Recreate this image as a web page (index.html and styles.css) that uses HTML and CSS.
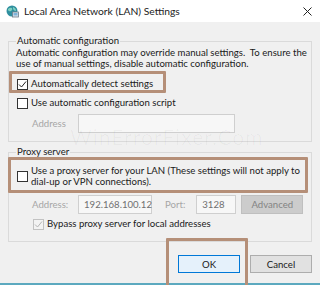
FILE: index.html
```html
<!DOCTYPE html>
<html>
<head>
<meta charset="utf-8">
<link rel="stylesheet" href="styles.css">
</head>
<body>
<div class="dialog">
  <div class="titlebar">
    <svg class="appicon" width="13" height="13" viewBox="0 0 13 13">
      <circle cx="6" cy="6" r="5.5" fill="#2f8f9f"/>
      <path d="M2 4 Q4 2 6 3 Q7 5 5 6 Q3 7 2 5Z" fill="#7fd0c0"/>
      <path d="M7 2 Q10 3 10 6 Q8 6 7 4Z" fill="#7fd0c0"/>
      <rect x="6.5" y="7" width="6" height="5" fill="#dfe6ec" stroke="#6b7c8a" stroke-width="0.8"/>
      <rect x="7.5" y="8" width="4" height="2.5" fill="#7fb3d9"/>
    </svg>
    <span class="title">Local Area Network (LAN) Settings</span>
    <svg class="close" width="9" height="9" viewBox="0 0 9 9">
      <path d="M0.5 0.5 L8.5 8.5 M8.5 0.5 L0.5 8.5" stroke="#222" stroke-width="1"/>
    </svg>
  </div>
  <div class="content">
    <fieldset class="group group-auto">
      <legend>Automatic configuration</legend>
      <p class="desc">Automatic configuration may override manual settings.&nbsp; To ensure the use of manual settings, disable automatic configuration.</p>
      <div class="row row-detect">
        <span class="cb"><svg width="9" height="9" viewBox="0 0 9 9"><path d="M1 4.5 L3.5 7 L8 1.5" fill="none" stroke="#222" stroke-width="1"/></svg></span>
        <span>Automatically detect settings</span>
      </div>
      <div class="row row-script">
        <span class="cb"></span>
        <span>Use automatic configuration script</span>
      </div>
      <div class="field-row field-row-1">
        <span class="lbl disabled">Address</span>
        <span class="input input-wide"></span>
      </div>
    </fieldset>
    <fieldset class="group group-proxy">
      <legend>Proxy server</legend>
      <div class="row row-proxy">
        <span class="cb"></span>
        <span class="proxy-text">Use a proxy server for your LAN (These settings will not apply to dial-up or VPN connections).</span>
      </div>
      <div class="field-row field-row-2">
        <span class="lbl disabled">Address:</span>
        <span class="input input-addr">192.168.100.12</span>
        <span class="lbl lbl-port disabled">Port:</span>
        <span class="input input-port">3128</span>
        <span class="btn btn-adv">Advanced</span>
      </div>
      <div class="row row-bypass">
        <span class="cb cb-disabled"><svg width="9" height="9" viewBox="0 0 9 9"><path d="M1 4.5 L3.5 7 L8 1.5" fill="none" stroke="#b5b5b5" stroke-width="1"/></svg></span>
        <span class="bypass-text">Bypass proxy server for local addresses</span>
      </div>
    </fieldset>
    <div class="buttons">
      <span class="btn btn-ok">OK</span>
      <span class="btn btn-cancel">Cancel</span>
    </div>
  </div>
  <div class="bottomline"></div>
  <div class="watermark">WinErrorFixer.Com</div>
  <div class="mark mark-1"></div>
  <div class="mark mark-2"></div>
  <div class="mark mark-3"></div>
</div>
</body>
</html>
```

FILE: styles.css
```css
* { box-sizing: border-box; }
html, body { margin: 0; padding: 0; background: #f0f0f0; }
.dialog {
  position: relative;
  width: 320px;
  height: 285px;
  overflow: hidden;
  background: #f0f0f0;
  font-family: Lato, "Noto Sans", sans-serif;
  font-size: 9.6px;
  color: #1a1a1a;
}
.titlebar {
  height: 22px;
  background: #ffffff;
  display: flex;
  align-items: center;
  padding-left: 6px;
}
.appicon { margin-right: 5px; margin-top: 1px; }
.title { font-size: 10.3px; color: #222; }
.close { margin-left: auto; margin-right: 8px; }
.content {
  height: 261px;
  padding: 0 8px;
  display: flex;
  flex-direction: column;
}
.group {
  margin: 0;
  border: 1px solid #dadada;
  padding: 0 7px;
  min-width: 0;
}
.group legend {
  padding: 0 1px;
  line-height: 12px;
}
.group-auto { margin-top: 13px; padding-bottom: 8px; }
.group-proxy { margin-top: 4px; padding-bottom: 11px; }
.desc { margin: 0 -8px 0 0; line-height: 11px; }
.row {
  display: flex;
  align-items: center;
  line-height: 14px;
}
.cb {
  width: 11px;
  height: 11px;
  border: 1px solid #333;
  background: #fff;
  flex: none;
  margin-right: 3px;
  margin-left: 1px;
  display: flex;
  align-items: center;
  justify-content: center;
}
.cb-disabled { border-color: #c2c2c2; background: #f3f3f3; }
.row-detect { margin-top: 8px; }
.row-script { margin-top: 5px; }
.field-row { display: flex; align-items: center; }
.field-row-1 { margin-top: 4px; }
.lbl { width: 62px; padding-left: 16px; }
.disabled { color: #a6a6a6; }
.input {
  height: 19px;
  border: 1px solid #cfcfcf;
  background: #f7f7f7;
  color: #707070;
  display: flex;
  align-items: center;
  padding-left: 5px;
}
.input-wide { width: 157px; }
.row-proxy { margin-top: 7px; }
.proxy-text { line-height: 11px; width: 280px; }
.field-row-2 { margin-top: 8px; }
.input-addr { width: 74px; }
.lbl-port { width: auto; padding-left: 13px; margin-right: 11px; }
.input-port { width: 40px; }
.btn {
  display: flex;
  align-items: center;
  justify-content: center;
  height: 19px;
  border: 1px solid #adadad;
  background: #e1e1e1;
}
.btn-adv {
  width: 62px;
  margin-left: 5px;
  background: #cccccc;
  border-color: #bfbfbf;
  color: #838383;
}
.row-bypass { margin-top: 4px; line-height: 12px; padding-left: 16px; }
.buttons {
  display: flex;
  justify-content: flex-end;
  gap: 10px;
  margin-top: 13px;
}
.btn-ok, .btn-cancel { width: 62px; height: 18px; }
.btn-ok { background: #e5f1fb; border-color: #0078d7; }
.bottomline {
  position: absolute;
  left: 0; right: 0; bottom: 0;
  height: 2px;
  background: #5ca9bf;
}
.watermark {
  position: absolute;
  left: 70px;
  top: 124px;
  font-size: 21px;
  color: rgba(0,0,0,0.03);
  letter-spacing: 1px;
  pointer-events: none;
}
.mark {
  position: absolute;
  border: 3px solid #b58f78;
  border-radius: 1px;
}
.mark-1 { left: 9px; top: 71px; width: 157px; height: 22px; }
.mark-2 { left: 8px; top: 157px; width: 300px; height: 36px; }
.mark-3 { left: 166px; top: 238px; width: 82px; height: 60px; }
```
